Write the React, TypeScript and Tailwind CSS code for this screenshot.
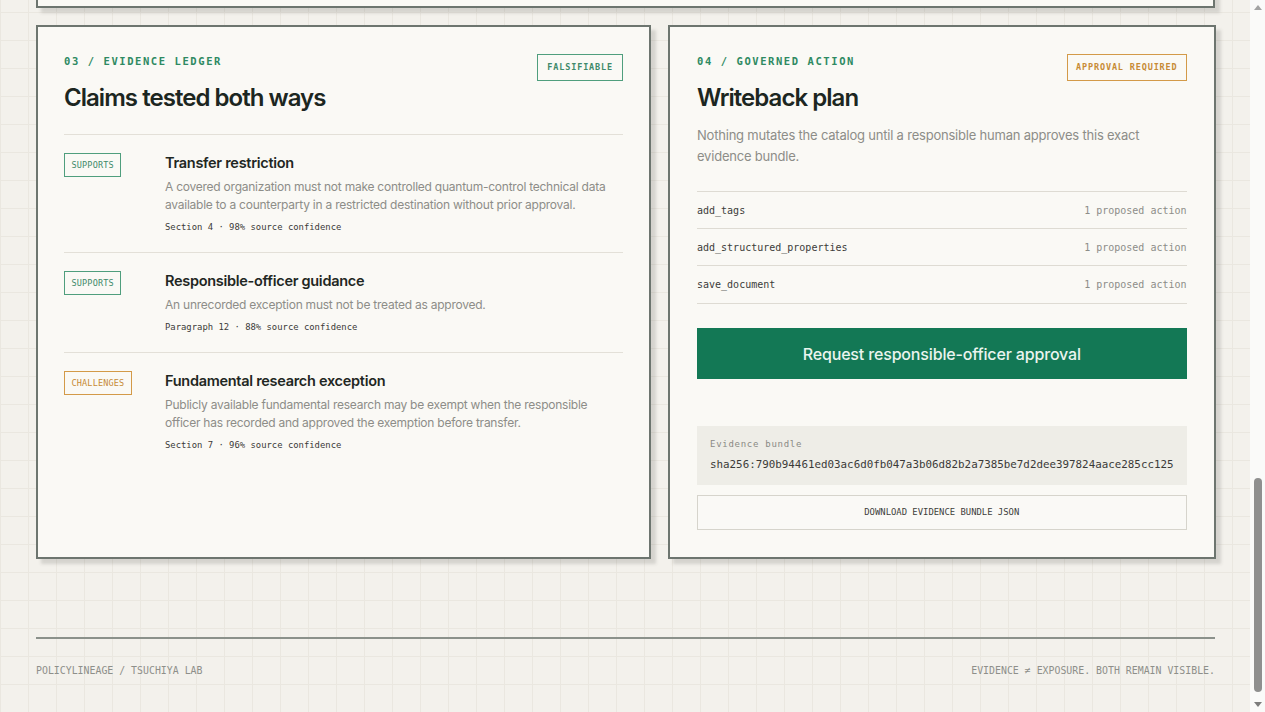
import { useLayoutEffect, useRef } from "react";

const SANS = { fontFamily: "Inter, 'Noto Sans', sans-serif" };
const MONO = { fontFamily: "'DejaVu Sans Mono', 'Liberation Mono', monospace" };

type Claim = {
  stance: "SUPPORTS" | "CHALLENGES";
  title: string;
  body: string;
  meta: string;
};

const claims: Claim[] = [
  {
    stance: "SUPPORTS",
    title: "Transfer restriction",
    body: "A covered organization must not make controlled quantum-control technical data available to a counterparty in a restricted destination without prior approval.",
    meta: "Section 4 · 98% source confidence",
  },
  {
    stance: "SUPPORTS",
    title: "Responsible-officer guidance",
    body: "An unrecorded exception must not be treated as approved.",
    meta: "Paragraph 12 · 88% source confidence",
  },
  {
    stance: "CHALLENGES",
    title: "Fundamental research exception",
    body: "Publicly available fundamental research may be exempt when the responsible officer has recorded and approved the exemption before transfer.",
    meta: "Section 7 · 96% source confidence",
  },
];

const actions = ["add_tags", "add_structured_properties", "save_document"];

function SectionLabel({ children }: { children: string }) {
  return (
    <div
      style={MONO}
      className="text-[10.5px] leading-[14px] font-bold tracking-[0.15em] text-[#2e8a62]"
    >
      {children}
    </div>
  );
}

function Title({ children }: { children: string }) {
  return (
    <h2
      style={SANS}
      className="mt-[15px] text-[24px] leading-[30px] font-semibold tracking-[-0.04em] text-[#1c2621]"
    >
      {children}
    </h2>
  );
}

function StanceBadge({ stance }: { stance: Claim["stance"] }) {
  const tone =
    stance === "SUPPORTS"
      ? "border-[#4f9e7d] text-[#3f8a6a]"
      : "border-[#d39a48] text-[#c78b35]";
  return (
    <span
      style={MONO}
      className={`flex h-[24px] w-fit items-center border-[1.5px] px-[6.5px] text-[8.5px] tracking-[0.02em] ${tone}`}
    >
      {stance}
    </span>
  );
}

function Card({ children, className = "" }: { children?: React.ReactNode; className?: string }) {
  return (
    <section
      className={`border-2 border-[#6d756f] bg-[#faf9f5] shadow-[5px_5px_3px_rgba(80,80,70,0.18)] ${className}`}
    >
      {children}
    </section>
  );
}

/* window scrollbar: arrows, track and thumb */
function ScrollRail() {
  return (
    <div className="flex h-screen w-[15px] shrink-0 flex-col bg-[#fafaf9]">
      <div className="flex h-[15px] items-center justify-center">
        <svg width="8" height="5" viewBox="0 0 8 5">
          <path d="M0 5 L4 0 L8 5 Z" fill="#a3a3a3" />
        </svg>
      </div>
      <div className="flex flex-1 flex-col justify-end pb-[5px]">
        <div className="mx-auto h-[214px] w-[8px] rounded-full bg-[#8f8f8f]" />
      </div>
      <div className="flex h-[15px] items-center justify-center">
        <svg width="8" height="5" viewBox="0 0 8 5">
          <path d="M0 0 L8 0 L4 5 Z" fill="#7d7d7d" />
        </svg>
      </div>
    </div>
  );
}

export default function App() {
  const scroller = useRef<HTMLDivElement>(null);

  useLayoutEffect(() => {
    const el = scroller.current;
    if (el) el.scrollTop = el.scrollHeight;
  }, []);

  return (
    <div className="flex h-screen overflow-hidden">
      <div
        ref={scroller}
        className="h-screen flex-1 overflow-y-scroll bg-[#f3f1ec] bg-[linear-gradient(to_right,#eae7e0_1px,transparent_1px),linear-gradient(to_bottom,#eae7e0_1px,transparent_1px)] bg-[length:28px_28px] bg-[position:0_12px] [scrollbar-width:none]"
      >
        <div className="ml-[36px] w-[1179px] pt-[40px] pb-[34px]">
          {/* earlier sections of the report */}
          <Card className="h-[1500px]" />

          <div className="mt-[17px] grid grid-cols-[615px_1fr] gap-[17px]">
            {/* evidence ledger */}
            <Card className="px-[26px] pt-[27px] pb-[27px]">
              <div className="flex items-start justify-between">
                <div>
                  <SectionLabel>03 / EVIDENCE LEDGER</SectionLabel>
                  <Title>Claims tested both ways</Title>
                </div>
                <span
                  style={MONO}
                  className="flex h-[27px] items-center border-[1.5px] border-[#4f9e7d] px-[9px] text-[8.5px] font-bold tracking-[0.1em] text-[#3f8a6a]"
                >
                  FALSIFIABLE
                </span>
              </div>

              <div className="mt-[21px] divide-y divide-[#e3e0d8] border-t border-[#e3e0d8]">
                {claims.map((c) => (
                  <div key={c.title} className="grid grid-cols-[101px_1fr] py-[18px]">
                    <StanceBadge stance={c.stance} />
                    <div>
                      <h3
                        style={SANS}
                        className="text-[14.5px] leading-[20px] font-semibold tracking-[-0.02em] text-[#1f2723]"
                      >
                        {c.title}
                      </h3>
                      <p
                        style={SANS}
                        className="mt-[5px] text-[12px] leading-[18px] tracking-[-0.02em] text-[#8d8d88]"
                      >
                        {c.body}
                      </p>
                      <p
                        style={MONO}
                        className="mt-[6px] text-[8.9px] leading-[14px] text-[#3a3a38]"
                      >
                        {c.meta}
                      </p>
                    </div>
                  </div>
                ))}
              </div>
            </Card>

            {/* governed action */}
            <Card className="px-[27px] pt-[27px] pb-[27px]">
              <div className="flex items-start justify-between">
                <div>
                  <SectionLabel>04 / GOVERNED ACTION</SectionLabel>
                  <Title>Writeback plan</Title>
                </div>
                <span
                  style={MONO}
                  className="flex h-[27px] items-center border-[1.5px] border-[#d39a48] px-[8px] text-[8.5px] font-bold tracking-[0.1em] text-[#c78b35]"
                >
                  APPROVAL REQUIRED
                </span>
              </div>

              <p
                style={SANS}
                className="mt-[12px] text-[13px] leading-[21px] tracking-[-0.016em] text-[#8d8d88]"
              >
                Nothing mutates the catalog until a responsible human approves this exact
                evidence bundle.
              </p>

              <ul className="mt-[24px] divide-y divide-[#dedbd3] border-y border-[#dedbd3]">
                {actions.map((a) => (
                  <li
                    key={a}
                    style={MONO}
                    className="flex h-[37px] items-center justify-between text-[10px]"
                  >
                    <span className="text-[#3c3c3a]">{a}</span>
                    <span className="text-[#8d8d88]">1 proposed action</span>
                  </li>
                ))}
              </ul>

              <button
                style={SANS}
                className="mt-[24px] flex h-[51px] w-full items-center justify-center bg-[#137855] text-[16px] font-medium tracking-[-0.01em] text-[#eaf4ee]"
              >
                Request responsible-officer approval
              </button>

              <div className="mt-[47px] bg-[#eeede7] px-[13px] pt-[12px] pb-[12px]">
                <div
                  style={MONO}
                  className="text-[9px] leading-[12px] tracking-[0.08em] text-[#8a8a85]"
                >
                  Evidence bundle
                </div>
                <div
                  style={MONO}
                  className="mt-[7px] text-[10.85px] leading-[16px] text-[#3a3a38]"
                >
                  sha256:790b94461ed03ac6d0fb047a3b06d82b2a7385be7d2dee397824aace285cc125
                </div>
              </div>

              <button
                style={MONO}
                className="mt-[10px] flex h-[35px] w-full items-center justify-center border border-[#d6d4cc] bg-[#faf9f6] text-[8.9px] text-[#3e3e3c]"
              >
                DOWNLOAD EVIDENCE BUNDLE JSON
              </button>
            </Card>
          </div>

          <footer className="mt-[78px] border-t-2 border-[#8b918b] pt-[24px]">
            <div
              style={MONO}
              className="flex items-center justify-between text-[9.9px] leading-[15px] text-[#8e8f8a]"
            >
              <span>POLICYLINEAGE / TSUCHIYA LAB</span>
              <span>EVIDENCE ≠ EXPOSURE. BOTH REMAIN VISIBLE.</span>
            </div>
          </footer>
        </div>
      </div>
      <ScrollRail />
    </div>
  );
}
